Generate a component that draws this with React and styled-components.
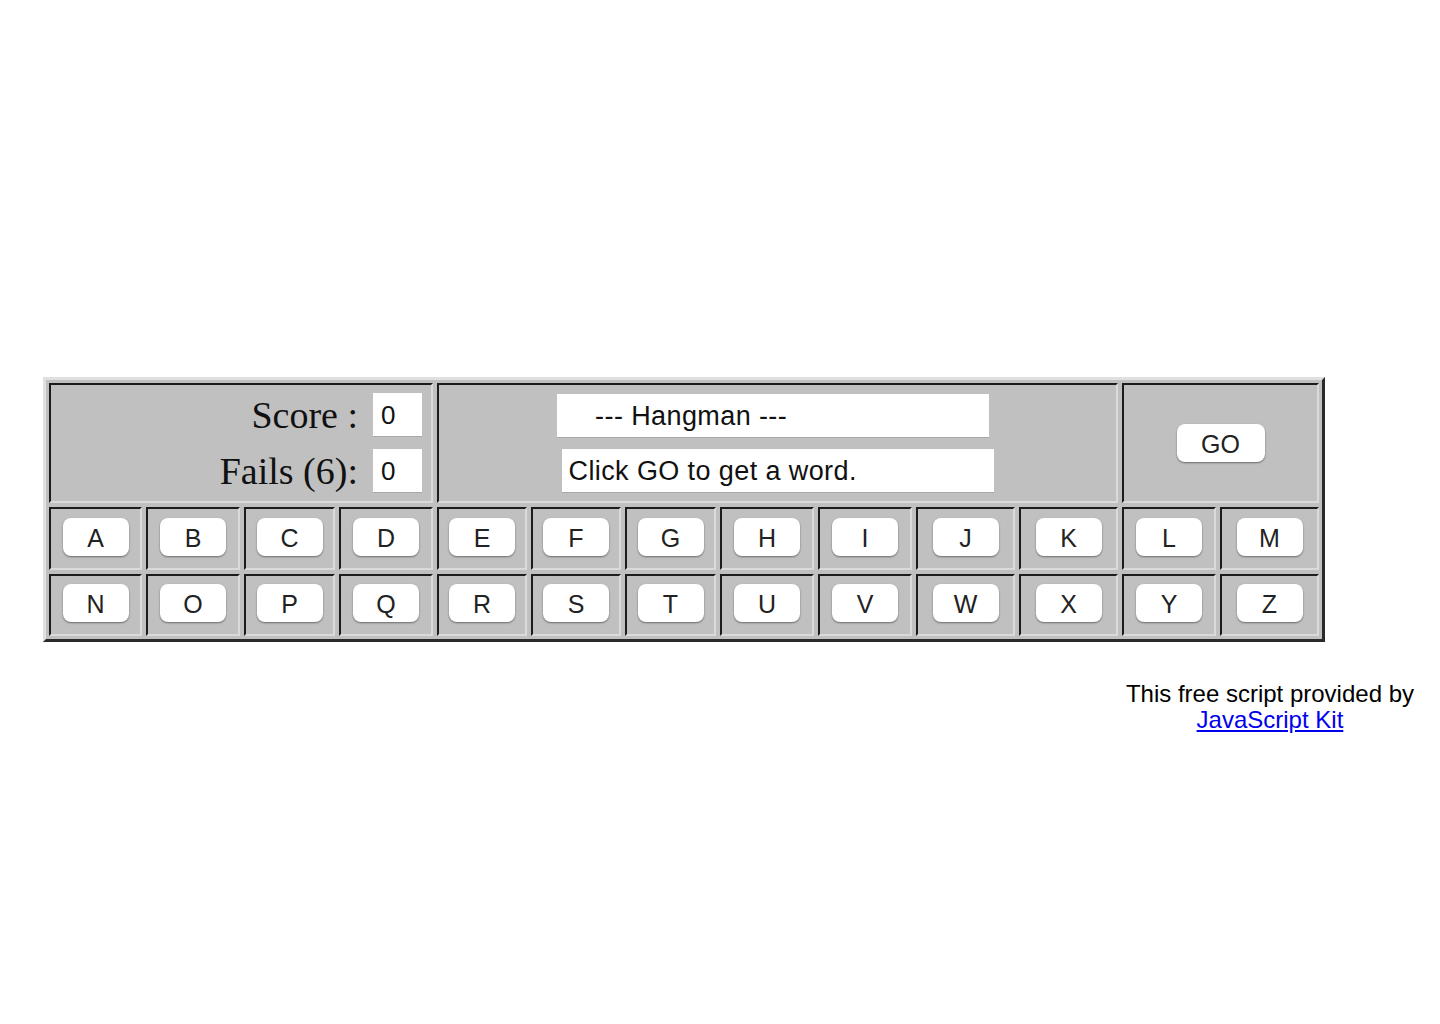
import styled, { createGlobalStyle } from 'styled-components';

const GlobalStyle = createGlobalStyle`
  body {
    margin: 0;
    background: #fff;
    font-family: "Liberation Sans", Arial, sans-serif;
  }
`;

const Page = styled.div`
  padding: 377px 26px 0 43px;
`;

const Board = styled.div`
  display: grid;
  grid-template-columns: 93px 94px 91px 94px 90px 90px 91px 94px 94px 99px 99px 94px 99px;
  grid-template-rows: 120px 63px 62px;
  gap: 4px;
  width: fit-content;
  padding: 3px;
  background: #c0c0c0;
  border: 3px solid;
  border-color: #e0e0e0 #2a2a2a #2a2a2a #e0e0e0;
`;

const Cell = styled.div`
  grid-column: span ${p => p.$span || 1};
  display: flex;
  flex-direction: column;
  align-items: ${p => p.$align || 'center'};
  justify-content: center;
  border: 2px solid;
  border-color: #1c1c1c #dadada #dadada #1c1c1c;
`;

const ScoreRow = styled.div`
  display: flex;
  align-items: center;
  justify-content: flex-end;
  gap: 15px;
  padding-right: 9px;
  & + & {
    margin-top: 12px;
  }
`;

const Label = styled.span`
  font-family: "Liberation Serif", "Times New Roman", serif;
  font-size: 38px;
  color: #111;
`;

const Field = styled.input`
  box-sizing: border-box;
  width: ${p => p.$width}px;
  height: 44px;
  padding: 2px 0 0 ${p => p.$pad || 7}px;
  border: none;
  border-bottom: 1px solid #a9a9a9;
  background: #fff;
  font-family: "Liberation Sans", Arial, sans-serif;
  font-size: ${p => p.$size || 27}px;
  letter-spacing: ${p => p.$spacing ?? 0.4}px;
  color: #111;
  outline: none;
  margin-right: ${p => p.$shift || 0}px;
  & + & {
    margin-top: 11px;
  }
`;

const Key = styled.button`
  width: ${p => p.$width || 66}px;
  height: 38px;
  padding: 3px 0 0;
  border: none;
  border-radius: 8px;
  background: #fff;
  box-shadow: 0 1px 2px rgba(0, 0, 0, 0.45);
  font-family: "Liberation Sans", Arial, sans-serif;
  font-size: 25px;
  color: #222;
  cursor: pointer;
  margin-bottom: ${p => p.$lift || 0}px;
`;

const Credit = styled.div`
  display: flex;
  justify-content: flex-end;
  margin-top: 39px;
`;

const CreditText = styled.div`
  text-align: center;
  font-size: 24px;
  line-height: 26px;
  color: #000;

  a {
    color: #0000ee;
    text-decoration: underline;
  }
`;

const rows = ['ABCDEFGHIJKLM', 'NOPQRSTUVWXYZ'];

export default function App() {
  return (
    <Page>
      <GlobalStyle />
      <Board>
        <Cell $span={4} $align="stretch">
          <ScoreRow>
            <Label>Score :</Label>
            <Field $width={49} $pad={8} $size={26} $spacing={0} readOnly value="0" />
          </ScoreRow>
          <ScoreRow>
            <Label>Fails (6):</Label>
            <Field $width={49} $pad={8} $size={26} $spacing={0} readOnly value="0" />
          </ScoreRow>
        </Cell>
        <Cell $span={7}>
          <Field $width={432} $shift={10} readOnly value="    --- Hangman ---" />
          <Field $width={432} readOnly value="Click GO to get a word." />
        </Cell>
        <Cell $span={2}>
          <Key $width={88}>GO</Key>
        </Cell>
        {rows.map(row =>
          row.split('').map(letter => (
            <Cell key={letter}>
              <Key $lift={4}>{letter}</Key>
            </Cell>
          ))
        )}
      </Board>
      <Credit>
        <CreditText>
          This free script provided by
          <br />
          <a href="#">JavaScript Kit</a>
        </CreditText>
      </Credit>
    </Page>
  );
}
